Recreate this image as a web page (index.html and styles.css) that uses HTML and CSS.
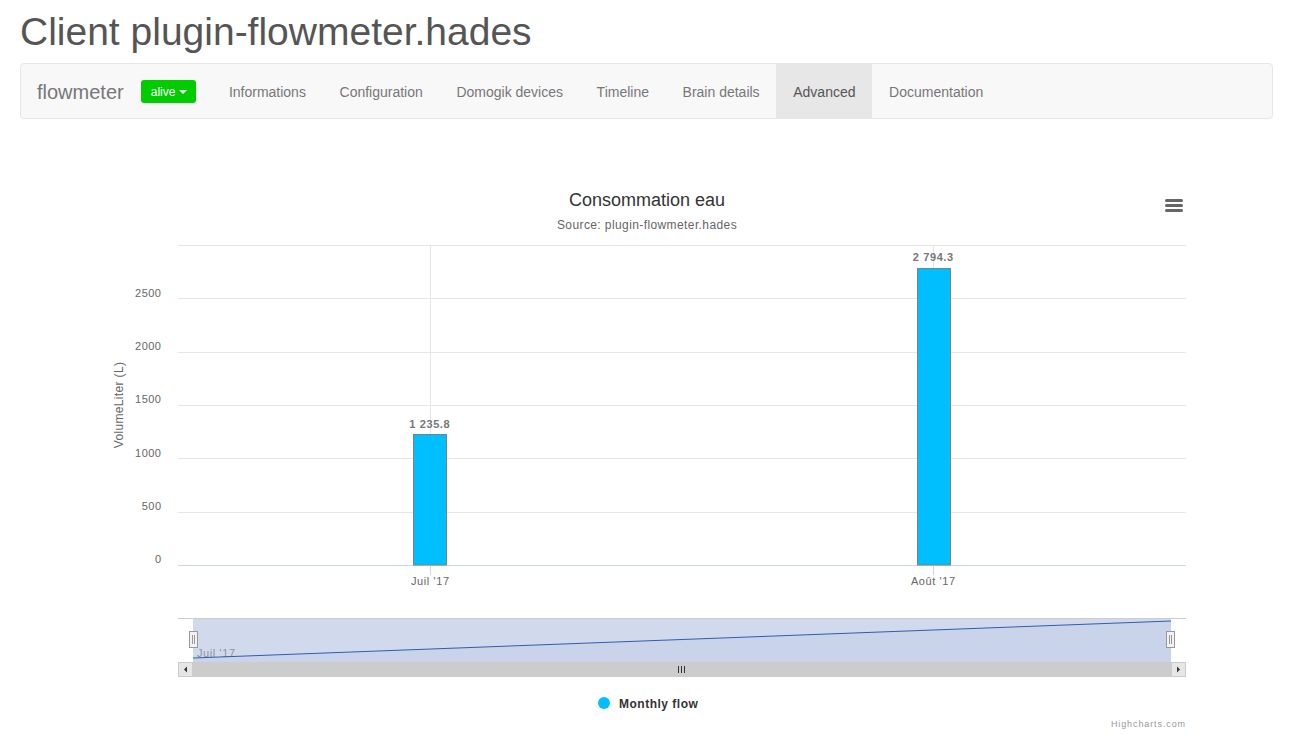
FILE: index.html
```html
<!DOCTYPE html>
<html lang="fr">
<head>
<meta charset="utf-8">
<title>Client plugin-flowmeter.hades</title>
<link rel="stylesheet" href="styles.css">
</head>
<body>
<div class="page">
  <h1 class="title">Client plugin-flowmeter.hades</h1>
  <nav class="navbar">
    <span class="brand">flowmeter</span>
    <span class="status">alive <span class="caret"></span></span>
    <ul class="nav">
      <li class="nav-item">Informations</li>
      <li class="nav-item">Configuration</li>
      <li class="nav-item">Domogik devices</li>
      <li class="nav-item">Timeline</li>
      <li class="nav-item">Brain details</li>
      <li class="nav-item active">Advanced</li>
      <li class="nav-item">Documentation</li>
    </ul>
  </nav>
  <div class="chart-wrap">
    <svg class="chart" width="1100" height="555" viewBox="96 180 1100 555" xmlns="http://www.w3.org/2000/svg">
      <!-- title -->
      <text x="647" y="206" text-anchor="middle" class="c-title">Consommation eau</text>
      <text x="647" y="228.5" text-anchor="middle" class="c-sub">Source: plugin-flowmeter.hades</text>
      <!-- menu -->
      <g stroke="#666" stroke-width="3" stroke-linecap="round">
        <line x1="1166.5" y1="200.5" x2="1181.5" y2="200.5"/>
        <line x1="1166.5" y1="205.5" x2="1181.5" y2="205.5"/>
        <line x1="1166.5" y1="210.5" x2="1181.5" y2="210.5"/>
      </g>
      <!-- grid -->
      <g stroke="#e6e6e6" stroke-width="1">
        <line x1="178" y1="245.5" x2="1186" y2="245.5"/>
        <line x1="178" y1="298.5" x2="1186" y2="298.5"/>
        <line x1="178" y1="352.5" x2="1186" y2="352.5"/>
        <line x1="178" y1="405.5" x2="1186" y2="405.5"/>
        <line x1="178" y1="458.5" x2="1186" y2="458.5"/>
        <line x1="178" y1="512.5" x2="1186" y2="512.5"/>
        <line x1="430.5" y1="245" x2="430.5" y2="565"/>
        <line x1="933.5" y1="245" x2="933.5" y2="565"/>
      </g>
      <g stroke="#ccd6eb" stroke-width="1">
        <line x1="178" y1="565.5" x2="1186" y2="565.5"/>
        <line x1="430.5" y1="565" x2="430.5" y2="575"/>
        <line x1="933.5" y1="565" x2="933.5" y2="575"/>
      </g>
      <!-- y labels -->
      <g class="c-label" text-anchor="end">
        <text x="161.5" y="296.5">2500</text>
        <text x="161.5" y="350">2000</text>
        <text x="161.5" y="403">1500</text>
        <text x="161.5" y="456.5">1000</text>
        <text x="161.5" y="510">500</text>
        <text x="161.5" y="563">0</text>
      </g>
      <text class="c-axis" transform="translate(123 405) rotate(-90)" text-anchor="middle">VolumeLiter (L)</text>
      <!-- bars -->
      <rect x="413.5" y="434.5" width="33" height="130.5" fill="#00bfff" stroke="#808080" stroke-width="1"/>
      <rect x="917.5" y="268.5" width="33" height="296.5" fill="#00bfff" stroke="#808080" stroke-width="1"/>
      <text x="429.8" y="427.5" text-anchor="middle" class="c-data">1 235.8</text>
      <text x="933.3" y="261" text-anchor="middle" class="c-data">2 794.3</text>
      <!-- x labels -->
      <text x="430.3" y="585" text-anchor="middle" class="c-label wide">Juil '17</text>
      <text x="933.3" y="585" text-anchor="middle" class="c-label wide">Août '17</text>
      <!-- navigator -->
      <text x="197" y="657" class="c-nav">Juil '17</text>
      <rect x="193" y="618" width="978" height="44" fill="rgba(102,133,194,0.3)"/>
      <line x1="178" y1="618.5" x2="1186" y2="618.5" stroke="#cccccc"/>
      <polygon points="193,658 1171,621 1171,662 193,662" fill="rgba(51,92,173,0.05)"/>
      <line x1="193" y1="658" x2="1171" y2="621" stroke="#335cad" stroke-width="1"/>
      <g>
        <rect x="189.5" y="631.5" width="8" height="16" fill="#f2f2f2" stroke="#999"/>
        <line x1="192.5" y1="635" x2="192.5" y2="644" stroke="#999"/>
        <line x1="194.5" y1="635" x2="194.5" y2="644" stroke="#999"/>
        <rect x="1166.5" y="631.5" width="8" height="16" fill="#f2f2f2" stroke="#999"/>
        <line x1="1169.5" y1="635" x2="1169.5" y2="644" stroke="#999"/>
        <line x1="1171.5" y1="635" x2="1171.5" y2="644" stroke="#999"/>
      </g>
      <!-- scrollbar -->
      <rect x="178" y="662" width="1008" height="15" fill="#f2f2f2"/>
      <rect x="193" y="662" width="978" height="15" fill="#cccccc"/>
      <g stroke="#333" stroke-width="1">
        <line x1="678.5" y1="666" x2="678.5" y2="673"/>
        <line x1="681.5" y1="666" x2="681.5" y2="673"/>
        <line x1="684.5" y1="666" x2="684.5" y2="673"/>
      </g>
      <rect x="178.5" y="662.5" width="14" height="14" fill="#e6e6e6" stroke="#cccccc"/>
      <polygon points="184,669.5 187,666.5 187,672.5" fill="#333"/>
      <rect x="1171.5" y="662.5" width="14" height="14" fill="#e6e6e6" stroke="#cccccc"/>
      <polygon points="1180,669.5 1177,666.5 1177,672.5" fill="#333"/>
      <!-- legend -->
      <circle cx="604" cy="703" r="6" fill="#00bfff"/>
      <text x="619" y="707.5" class="c-legend">Monthly flow</text>
      <!-- credits -->
      <text x="1186" y="727" text-anchor="end" class="c-credits">Highcharts.com</text>
    </svg>
  </div>
</div>
</body>
</html>
```

FILE: styles.css
```css
html, body {
  margin: 0;
  padding: 0;
  background: #fff;
  overflow: hidden;
}

body {
  font-family: "Liberation Sans", Arial, sans-serif;
  color: #333;
}

.page {
  padding: 0 17px 0 20px;
}

.title {
  margin: 10px 0 9px 0;
  font-size: 39px;
  line-height: 44px;
  font-weight: normal;
  color: #555;
}

.navbar {
  display: flex;
  align-items: center;
  height: 54px;
  background: #f8f8f8;
  border: 1px solid #e7e7e7;
  border-radius: 4px;
  padding-left: 16px;
}

.brand {
  font-size: 20px;
  line-height: 20px;
  color: #777;
  margin-right: 17px;
  padding-top: 1px;
}

.status {
  display: inline-flex;
  align-items: center;
  gap: 4px;
  height: 23px;
  padding: 1px 9px 0 10px;
  background: #00cc00;
  color: #fff;
  font-size: 12px;
  border-radius: 3px;
  box-sizing: border-box;
}

.caret {
  width: 0;
  height: 0;
  border-left: 4px solid transparent;
  border-right: 4px solid transparent;
  border-top: 4px solid #fff;
  margin-top: 1px;
}

.nav {
  display: flex;
  list-style: none;
  margin: 0 0 0 15.7px;
  padding: 0;
  height: 54px;
}

.nav-item {
  padding: 2px 16.8px 0;
  font-size: 14px;
  line-height: 52px;
  color: #777;
}

.nav-item.active {
  background: #e7e7e7;
  color: #555;
}

.chart-wrap {
  padding: 61px 0 0 76px;
}

.chart {
  display: block;
  font-family: "Liberation Sans", Arial, sans-serif;
}

.c-title {
  font-size: 18px;
  fill: #333;
}

.c-sub {
  font-size: 12px;
  letter-spacing: 0.4px;
  fill: #666;
}

.c-label {
  font-size: 11px;
  letter-spacing: 0.5px;
  fill: #666;
}

.c-label.wide {
  letter-spacing: 0.6px;
}

.c-axis {
  font-size: 12px;
  letter-spacing: 0.35px;
  fill: #666;
}

.c-data {
  font-size: 11px;
  font-weight: bold;
  letter-spacing: 0.6px;
  fill: #777;
}

.c-nav {
  font-size: 11px;
  letter-spacing: 0.6px;
  fill: #999;
}

.c-legend {
  font-size: 12px;
  font-weight: bold;
  letter-spacing: 0.5px;
  fill: #333;
}

.c-credits {
  font-size: 9px;
  letter-spacing: 0.9px;
  fill: #999;
}
```
